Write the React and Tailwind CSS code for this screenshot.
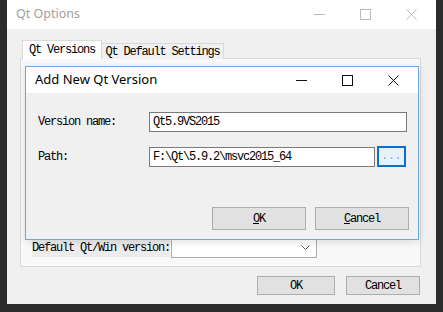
import React from "react";

const mono = { fontFamily: '"Liberation Mono", "DejaVu Sans Mono", monospace' };
const ui = { fontFamily: '"Noto Sans", "Open Sans", sans-serif' };

const Btn = ({ label, className = "" }) => (
  <div
    className={`flex items-center justify-center bg-[#e1e1e1] border border-[#adadad] text-[12px] text-black tracking-[-1.2px] ${className}`}
    style={mono}
  >
    <span>
      <span className="underline">{label[0]}</span>
      {label.slice(1)}
    </span>
  </div>
);

const WinButtons = ({ color, gapClass }) => (
  <div className={`flex items-center ${gapClass}`}>
    <svg width="11" height="11" viewBox="0 0 11 11">
      <path d="M0 5.5H11" stroke={color} strokeWidth="1" />
    </svg>
    <svg width="11" height="11" viewBox="0 0 11 11">
      <rect x="0.5" y="0.5" width="10" height="10" fill="none" stroke={color} strokeWidth="1" />
    </svg>
    <svg width="11" height="11" viewBox="0 0 11 11">
      <path d="M0.5 0.5L10.5 10.5M10.5 0.5L0.5 10.5" stroke={color} strokeWidth="1" />
    </svg>
  </div>
);

const App = () => {
  return (
    <div className="relative w-[443px] h-[312px] bg-[#2b2b2b] overflow-hidden">
      <div className="pl-[7px]">
        {/* Qt Options window */}
        <div className="w-[429px] h-[304px] bg-[#f0f0f0] flex flex-col">
          <div className="h-[29px] bg-white flex items-center justify-between pl-[9px] pr-[19px]">
            <span className="text-[12.5px] text-[#a0a0a0]" style={ui}>
              Qt Options
            </span>
            <div className="opacity-40">
              <WinButtons color="#555" gapClass="gap-[35px]" />
            </div>
          </div>

          <div className="flex-1 pl-[13px] pr-[15px] pt-[11px]">
            {/* tabs */}
            <div className="flex items-end h-[19px] pl-[2px]">
              <div
                className="h-[19px] w-[80px] bg-white border border-b-0 border-[#d9d9d9] flex items-center justify-center text-[12px] tracking-[-1.2px] relative z-10"
                style={mono}
              >
                Qt Versions
              </div>
              <div
                className="h-[16px] w-[122px] bg-[#f0f0f0] border border-l-0 border-b-0 border-[#d9d9d9] flex items-center justify-center text-[12px] tracking-[-1.2px]"
                style={mono}
              >
                Qt Default Settings
              </div>
            </div>
            <div className="h-[209px] -mt-px border border-[#d9d9d9] bg-[#f9f9f9] flex flex-col justify-end pb-[8px] pl-[11px]">
              <div className="flex items-center gap-[1px]">
                <span className="text-[12px] tracking-[-1.2px] bg-[#ececec]" style={mono}>
                  Default Qt/Win version:
                </span>
                <div className="w-[146px] h-[20px] bg-white border border-[#adadad] flex items-center justify-end pr-[6px]">
                  <svg width="9" height="6" viewBox="0 0 9 6">
                    <path d="M0.5 0.5L4.5 4.5L8.5 0.5" fill="none" stroke="#555" strokeWidth="1" />
                  </svg>
                </div>
              </div>
            </div>
            <div className="flex justify-end gap-[11px] mt-[9px] pr-[1px]">
              <Btn label="OK" className="w-[78px] h-[19px] [&_.underline]:no-underline" />
              <Btn label="Cancel" className="w-[74px] h-[19px] [&_.underline]:no-underline" />
            </div>
          </div>
        </div>
      </div>

      {/* Add New Qt Version dialog */}
      <div className="absolute left-[25px] top-[66px] w-[394px] h-[174px] border border-[#6fa8dc] bg-[#f0f0f0] flex flex-col shadow-[0_2px_8px_rgba(0,0,0,0.12)]">
        <div className="h-[26px] bg-white flex items-center justify-between pl-[9px] pr-[19px]">
          <span className="text-[13px] text-black" style={ui}>
            Add New Qt Version
          </span>
          <WinButtons color="#111" gapClass="gap-[35px]" />
        </div>
        <div className="flex-1 flex flex-col pl-[12px] pr-[11px] pt-[19px]">
          <div className="flex items-center h-[20px]">
            <span className="w-[111px] text-[12px] tracking-[-1.2px]" style={mono}>
              Version name:
            </span>
            <div
              className="w-[258px] h-[20px] bg-white border border-[#7a7a7a] flex items-center pl-[3px] text-[12px] tracking-[-1.2px]"
              style={mono}
            >
              Qt5.9VS2015
            </div>
          </div>
          <div className="flex items-center h-[21px] mt-[14px]">
            <span className="w-[111px] text-[12px] tracking-[-1.2px]" style={mono}>
              Path:
            </span>
            <div
              className="w-[226px] h-[20px] bg-white border border-[#7a7a7a] flex items-center pl-[3px] text-[12px] tracking-[-1.2px]"
              style={mono}
            >
              F:\Qt\5.9.2\msvc2015_64
            </div>
            <div
              className="ml-[2px] w-[29px] h-[21px] bg-[#e5f1fb] border-2 border-[#0f6fc6] flex items-center justify-center text-[11px] text-[#999]"
              style={mono}
            >
              ...
            </div>
          </div>
          <div className="flex justify-end gap-[9px] mt-[40px] -mr-[2px]">
            <Btn label="OK" className="w-[94px] h-[23px]" />
            <Btn label="Cancel" className="w-[94px] h-[23px]" />
          </div>
        </div>
      </div>
    </div>
  );
};

export default App;
